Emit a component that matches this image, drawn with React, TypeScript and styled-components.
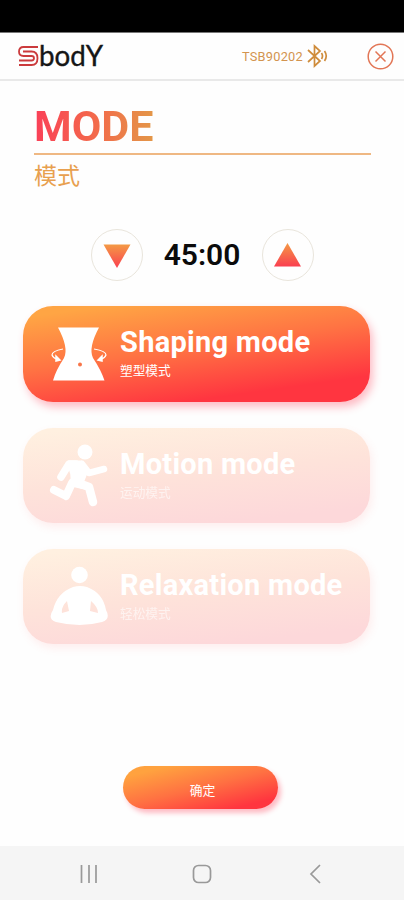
import React from "react";
import styled, { createGlobalStyle } from "styled-components";

const GlobalStyle = createGlobalStyle`
  * { box-sizing: border-box; }
  body { margin: 0; background: #fff; font-family: Roboto, "Noto Sans CJK SC", sans-serif; }
  button { font-family: inherit; border: 0; padding: 0; background: none; }
`;

const Screen = styled.div`
  width: 404px;
  height: 900px;
  display: flex;
  flex-direction: column;
  background: #fefefe;
  overflow: hidden;
`;

const StatusBar = styled.div`
  height: 33px;
  flex: none;
  background: #000;
  border-bottom: 1px solid #777;
`;

const Header = styled.header`
  height: 48px;
  flex: none;
  display: flex;
  align-items: center;
  padding: 0 10px 0 17px;
  border-bottom: 2px solid #e9e9e9;
`;

const Device = styled.div`
  margin-left: auto;
  display: flex;
  align-items: center;
  gap: 3px;
  color: #d3944f;
  font-size: 12.8px;
  letter-spacing: 0.25px;
`;

const CloseButton = styled.button`
  display: flex;
  margin-left: 38px;
`;

const Heading = styled.section`
  margin: 23px 33px 0 34px;
`;

const Title = styled.h1`
  margin: 0;
  height: 49px;
  width: 121px;
  line-height: 45px;
  font-size: 43px;
  font-weight: 700;
  color: transparent;
  background: linear-gradient(90deg, #fa4058, #f3694b 50%, #e39848);
  background-clip: text;
  -webkit-background-clip: text;
`;

const Subtitle = styled.div`
  border-top: 2px solid #efb883;
  color: #e8a04f;
  font-size: 23px;
  line-height: 44px;
  height: 46px;
`;

const Timer = styled.section`
  margin-top: 30px;
  height: 52px;
  display: flex;
  justify-content: center;
  align-items: center;
  gap: 20px;
`;

const StepButton = styled.button`
  width: 52px;
  height: 52px;
  flex: none;
  border-radius: 50%;
  border: 1.5px solid #e9e5dc;
  display: grid;
  place-items: center;
`;

const Time = styled.div`
  width: 79px;
  text-align: center;
  font-size: 30px;
  line-height: 30px;
  font-weight: 600;
  color: #0b0b0b;
`;

const Modes = styled.main`
  margin: 25px 34px 0 23px;
  display: flex;
  flex-direction: column;
  gap: 26px;
`;

const ModeCard = styled.button<{ $active?: boolean }>`
  height: ${(p) => (p.$active ? 96 : 95)}px;
  display: flex;
  align-items: center;
  text-align: left;
  padding-left: 26px;
  border-radius: 30px;
  color: #fff;
  background: ${(p) =>
    p.$active
      ? "linear-gradient(172deg, #ffa544 8%, #ff7343 45%, #ff3540 82%)"
      : "linear-gradient(174deg, #fff0e0 5%, #fee3da 48%, #fdd8da 88%)"};
  box-shadow: ${(p) => (p.$active ? "3px 5px 8px #ff365055" : "2px 4px 9px #ff70701f")};
`;

const ModeLabel = styled.div`
  margin: 0 0 3px 11px;
`;

const ModeName = styled.div`
  font-size: 29px;
  line-height: 34px;
  font-weight: 700;
  letter-spacing: 0.27px;
  white-space: nowrap;
`;

const ModeNote = styled.div<{ $faint?: boolean }>`
  margin-top: 3px;
  font-size: 12.7px;
  line-height: 18px;
  opacity: ${(p) => (p.$faint ? 0.6 : 1)};
`;

const Confirm = styled.button`
  width: 155px;
  height: 43px;
  flex: none;
  margin: 122px 0 0 123px;
  border-radius: 22px;
  color: #fff;
  font-size: 12.8px;
  line-height: 20px;
  padding: 6px 0 0 4px;
  background: linear-gradient(166deg, #ffa23f 14%, #ff7142 50%, #ff353f 86%);
  box-shadow: 3px 4px 5px #ff365055;
`;

const NavBar = styled.nav`
  margin-top: auto;
  height: 54px;
  flex: none;
  display: flex;
  justify-content: space-between;
  align-items: center;
  padding: 2px 79px 0;
  background: #f5f5f5;
`;

const Logo = () => (
  <svg width="90" height="44" viewBox="0 -8 90 44">
    <g fill="none" stroke="#cb3b3d" strokeWidth="1.8">
      <path d="M21 5H6.500Q2 5 2 9.500T6.500 14H14.500Q17 14 17 16.200T14.500 18.500H2" />
      <path d="M6 9.500H14.500Q20.500 9.500 20.500 16.200T14.500 23H2" />
    </g>
    <text x="22" y="24" fontFamily="Lato" fontSize="28" fill="#161616" stroke="#161616" strokeWidth=".35" textLength="64" lengthAdjust="spacingAndGlyphs">bodY</text>
  </svg>
);

const BluetoothIcon = () => (
  <svg width="23" height="24" viewBox="0 0 23 24" fill="none" stroke="#cf8c3b" strokeWidth="1.7">
    <path d="M2 6L14 17L8.500 22V2L14 7L2 18" />
    <path d="M15.500 9Q17.500 12 15.500 15M18.500 7Q22 12 18.500 17" />
  </svg>
);

const CloseIcon = () => (
  <svg width="27" height="27" viewBox="0 0 27 27" fill="none" stroke="#e27656" strokeWidth="1.5">
    <circle cx="13.500" cy="13.500" r="12.300" />
    <path d="M8.500 8.500L18.500 18.500M18.500 8.500L8.500 18.500" />
  </svg>
);

const Triangle = ({ up }: { up?: boolean }) => (
  <svg width="28" height="26" viewBox="0 0 28 26">
    <defs>
      <linearGradient id={up ? "rise" : "fall"} x2="0" y2="1">
        <stop stopColor="#f49a45" />
        <stop offset="1" stopColor="#fa3f50" />
      </linearGradient>
    </defs>
    <path d={up ? "M13.500 1L27 24.500H0Z" : "M.5 2.500H27.500L14 26Z"} fill={`url(#${up ? "rise" : "fall"})`} />
  </svg>
);

const ShapingIcon = () => (
  <svg width="60" height="60" viewBox="0 0 60 60">
    <path d="M9 3.500H50Q39 24 44 34Q52 46 55.500 56.500H4Q7 46 15 34Q20 24 9 3.500Z" fill="#fff" />
    <circle cx="31" cy="40.500" r="2" fill="#f87548" />
    <g fill="none" stroke="#fff" strokeWidth="1.200">
      <path d="M14 25Q3 27 3 31Q4 34 8 35" />
      <path d="M45 25Q57 27 57 31Q56 34 52 35" />
    </g>
    <path d="M7 32L11 36L7 37ZM53 32L49 36L53 37Z" fill="#fff" stroke="#fff" strokeWidth="1.500" />
  </svg>
);

const MotionIcon = () => (
  <svg width="60" height="68" viewBox="0 0 60 68">
    <circle cx="36" cy="10" r="7.500" fill="#fff" />
    <g fill="none" stroke="#fff" strokeLinecap="round" strokeLinejoin="round">
      <path d="M27 22H20L12 35" strokeWidth="7.500" />
      <path d="M33 22L40 31L55 27" strokeWidth="6.500" />
      <path d="M23 41L17 54L5 48" strokeWidth="8" />
      <path d="M29 41L40 45L44 60" strokeWidth="8.500" />
    </g>
    <path d="M19 18.500H33L39 30L35 40L33 47L20 44Q23 35 20 28Z" fill="#fff" />
  </svg>
);

const RelaxIcon = () => (
  <svg width="60" height="64" viewBox="0 0 60 64">
    <circle cx="30.500" cy="10" r="8.300" fill="#fff" />
    <path
      fillRule="evenodd"
      d="M24 22Q31 20 38 22Q54 28 57 45Q62 54 53 57Q31 63 7 57Q-2 54 4 45Q8 28 24 22ZM18 36Q12 42 13 48L20 46ZM42 36L41 46L49 48Q49 42 42 36Z"
      fill="#fff"
    />
  </svg>
);

const modes = [
  { name: "Shaping mode", note: "塑型模式", icon: <ShapingIcon />, active: true },
  { name: "Motion mode", note: "运动模式", icon: <MotionIcon /> },
  { name: "Relaxation mode", note: "轻松模式", icon: <RelaxIcon /> },
];

export default function App() {
  return (
    <Screen>
      <GlobalStyle />
      <StatusBar />
      <Header>
        <Logo />
        <Device>
          TSB90202
          <BluetoothIcon />
        </Device>
        <CloseButton aria-label="Close">
          <CloseIcon />
        </CloseButton>
      </Header>
      <Heading>
        <Title>MODE</Title>
        <Subtitle>模式</Subtitle>
      </Heading>
      <Timer>
        <StepButton aria-label="Decrease">
          <Triangle />
        </StepButton>
        <Time>45:00</Time>
        <StepButton aria-label="Increase">
          <Triangle up />
        </StepButton>
      </Timer>
      <Modes>
        {modes.map((m) => (
          <ModeCard key={m.name} $active={m.active}>
            {m.icon}
            <ModeLabel>
              <ModeName>{m.name}</ModeName>
              <ModeNote $faint={!m.active}>{m.note}</ModeNote>
            </ModeLabel>
          </ModeCard>
        ))}
      </Modes>
      <Confirm>确定</Confirm>
      <NavBar>
        <svg width="20" height="20" viewBox="0 0 20 20" stroke="#999" strokeWidth="1.7">
          <path d="M2.500 1V19M10 1V19M17 1V19" />
        </svg>
        <svg width="20" height="20" viewBox="0 0 20 20" fill="none" stroke="#999" strokeWidth="1.700">
          <rect x="1.500" y="1.500" width="17" height="17" rx="5" />
        </svg>
        <svg width="20" height="20" viewBox="0 0 20 20" fill="none" stroke="#999" strokeWidth="1.700">
          <path d="M15 1L6 10L15 19" />
        </svg>
      </NavBar>
    </Screen>
  );
}
